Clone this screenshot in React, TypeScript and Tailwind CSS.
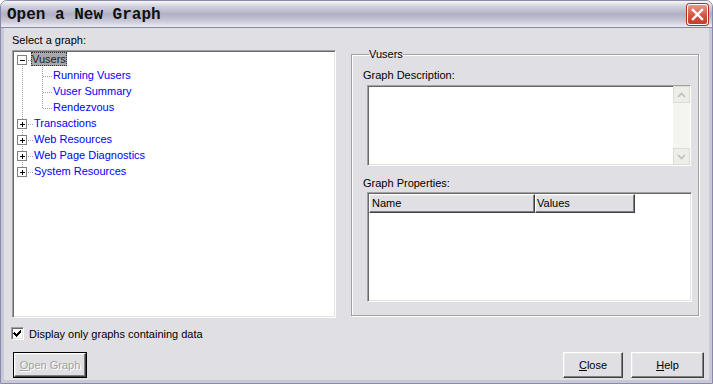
import React from "react";

const sunken =
   "border border-t-[#a0a0a0] border-l-[#a0a0a0] border-b-white border-r-white shadow-[inset_1px_1px_0_#696969,inset_-1px_-1px_0_#e3e3e3]";

const raised =
   "border border-t-white border-l-white border-b-[#404040] border-r-[#404040] shadow-[inset_-1px_-1px_0_#808080,inset_1px_1px_0_#e8e8e8]";

type Node = { label: string; level: number; selected?: boolean };

const nodes: Node[] = [
   { label: "Vusers", level: 0, selected: true },
   { label: "Running Vusers", level: 1 },
   { label: "Vuser Summary", level: 1 },
   { label: "Rendezvous", level: 1 },
   { label: "Transactions", level: 0 },
   { label: "Web Resources", level: 0 },
   { label: "Web Page Diagnostics", level: 0 },
   { label: "System Resources", level: 0 },
];

const TreeLines = () => {
   // rows start at the top of the panel, 16px per row, centres at +8
   const cy = (i: number) => 1 + i * 16 + 8;
   const tops = [0, 4, 5, 6, 7];
   return (
      <svg
         className="absolute left-0 top-0 pointer-events-none"
         width="60"
         height="200"
         shapeRendering="crispEdges"
      >
         <line x1="9.5" y1={cy(0)} x2="9.5" y2={cy(7)} stroke="#a0a0a0" strokeDasharray="1 1" />
         <line x1="29.5" y1={cy(0) + 7} x2="29.5" y2={cy(3)} stroke="#a0a0a0" strokeDasharray="1 1" />
         {[1, 2, 3].map((i) => (
            <line key={i} x1="30" y1={cy(i) + 0.5} x2="40" y2={cy(i) + 0.5} stroke="#a0a0a0" strokeDasharray="1 1" />
         ))}
         {tops.map((i) => (
            <g key={i}>
               <line x1="15" y1={cy(i) + 0.5} x2="20" y2={cy(i) + 0.5} stroke="#a0a0a0" strokeDasharray="1 1" />
               <rect x="4.5" y={cy(i) - 4.5} width="9" height="9" fill="white" stroke="#808080" />
               <line x1="7" y1={cy(i) + 0.5} x2="12" y2={cy(i) + 0.5} stroke="black" />
               {i !== 0 && <line x1="9.5" y1={cy(i) - 2} x2="9.5" y2={cy(i) + 3} stroke="black" />}
            </g>
         ))}
      </svg>
   );
};

const Button = ({ u, rest, w, disabled, def }: { u: string; rest: string; w: string; disabled?: boolean; def?: boolean }) => (
   <div className={`${w} h-[26px] ${def ? "border border-black" : ""}`}>
      <div className={`w-full h-full bg-[#e0dfe3] ${raised} flex items-center justify-center text-[11px] ${disabled ? "text-[#a0a0a0] [text-shadow:1px_1px_0_#fff]" : "text-black"}`}>
         <span>
            <span className="underline">{u}</span>
            {rest}
         </span>
      </div>
   </div>
);

export default function App() {
   return (
      <div className="w-[713px] h-[384px] overflow-hidden bg-white font-['Liberation_Sans',Arial,sans-serif] text-[11px] text-black">
         <div className="w-full h-full flex flex-col border border-[#8a8aa8] rounded-t-[7px] bg-[#e0dfe3] overflow-hidden">
            {/* title bar */}
            <div className="h-[27px] shrink-0 flex items-center justify-between pl-[6px] pr-[4px] bg-[linear-gradient(to_bottom,#f8f8fa_0%,#d2d2de_20%,#b0b0c6_50%,#c6c6d6_75%,#ececf2_100%)] border-b border-[#8a8aa8]">
               <span className="font-['Liberation_Mono',monospace] font-bold text-[16px] text-[#101010] mt-[2px]">
                  Open a New Graph
               </span>
               <div className="w-[21px] h-[21px] rounded-[3px] border border-white bg-[linear-gradient(to_bottom,#e89a8a,#d0503c_60%,#c4402c)] shadow-[0_0_0_1px_#b03020] flex items-center justify-center mt-[1px]">
                  <svg width="13" height="13" viewBox="0 0 13 13">
                     <path d="M2 2 L11 11 M11 2 L2 11" stroke="white" strokeWidth="2.4" strokeLinecap="square" />
                  </svg>
               </div>
            </div>

            {/* body */}
            <div className="flex-1 flex flex-col border-x-[3px] border-b-[3px] border-[#c8c8d8] px-[8px]">
               <div className="flex">
                  <div className="w-[324px] flex flex-col">
                     <div className="mt-[5px] h-[14px] leading-[14px]">Select a graph:</div>
                     <div className={`relative mt-[3px] h-[268px] bg-white ${sunken}`}>
                        <TreeLines />
                        <div>
                           {nodes.map((n) => (
                              <div key={n.label} className="h-[16px] flex items-center">
                                 <span
                                    className={`${n.level === 0 ? (n.selected ? "ml-[18px]" : "ml-[20px]") : "ml-[39px]"} leading-[14px] px-[1px] ${
                                       n.selected ? "bg-[#a8a8ac] text-[#202020] outline-1 outline-dotted outline-[#303030] -outline-offset-1" : "text-[#0000ff]"
                                    }`}
                                 >
                                    {n.label}
                                 </span>
                              </div>
                           ))}
                        </div>
                     </div>
                  </div>

                  {/* right group */}
                  <fieldset className="ml-[15px] mt-[20px] w-[348px] h-[268px] border border-[#a0a0a0] shadow-[inset_1px_1px_0_#fff,1px_1px_0_#fff] px-[11px] m-0 min-w-0">
                     <legend className="ml-[6px] px-0 leading-[12px] text-[11px] -mb-[1px]">Vusers</legend>
                     <div className="leading-[14px] mt-[9px]">Graph Description:</div>
                     <div className={`mt-[3px] ml-[4px] w-[324px] h-[81px] bg-white flex justify-end ${sunken}`}>
                        <div className="w-[17px] h-full bg-[#f4f4f0] flex flex-col justify-between">
                           <div className="h-[17px] bg-[#eeeee8] border border-[#dcdcd4] flex items-center justify-center">
                              <svg width="9" height="6" viewBox="0 0 9 6">
                                 <path d="M1 5 L4.5 1.5 L8 5" stroke="#c0c0bc" strokeWidth="1.6" fill="none" />
                              </svg>
                           </div>
                           <div className="h-[17px] bg-[#eeeee8] border border-[#dcdcd4] flex items-center justify-center">
                              <svg width="9" height="6" viewBox="0 0 9 6">
                                 <path d="M1 1 L4.5 4.5 L8 1" stroke="#c0c0bc" strokeWidth="1.6" fill="none" />
                              </svg>
                           </div>
                        </div>
                     </div>
                     <div className="leading-[14px] mt-[10px]">Graph Properties:</div>
                     <div className={`mt-[2px] ml-[4px] w-[325px] h-[110px] bg-white ${sunken}`}>
                        <div className="flex pl-[1px] pt-[1px]">
                           <div className={`w-[166px] h-[19px] bg-[#e0dfe3] ${raised} leading-[17px] pl-[2px]`}>Name</div>
                           <div className={`w-[100px] h-[19px] bg-[#e0dfe3] ${raised} leading-[17px] pl-[1px]`}>Values</div>
                        </div>
                     </div>
                  </fieldset>
               </div>

               {/* checkbox */}
               <div className="mt-[9px] ml-[-1px] flex items-center h-[13px]">
                  <div className={`w-[13px] h-[13px] bg-white ${sunken} flex items-center justify-center`}>
                     <svg width="9" height="9" viewBox="0 0 9 9" shapeRendering="crispEdges">
                        <path d="M1 3h1v1h1v1h1v-1h1v-1h1v-1h1v-1h1v3h-1v1h-1v1h-1v1h-1v1h-1v-1h-1v-1h-1v-1h-1z" fill="black" />
                     </svg>
                  </div>
                  <span className="ml-[5px] leading-[14px]">Display only graphs containing data</span>
               </div>

               {/* buttons */}
               <div className="mt-[12px] flex items-start">
                  <div className="ml-[1px]">
                     <Button u="O" rest="pen Graph" w="w-[74px]" disabled def />
                  </div>
                  <div className="ml-auto flex gap-[8px] mr-[-3px]">
                     <Button u="C" rest="lose" w="w-[60px]" />
                     <Button u="H" rest="elp" w="w-[73px]" />
                  </div>
               </div>
            </div>
         </div>
      </div>
   );
}
